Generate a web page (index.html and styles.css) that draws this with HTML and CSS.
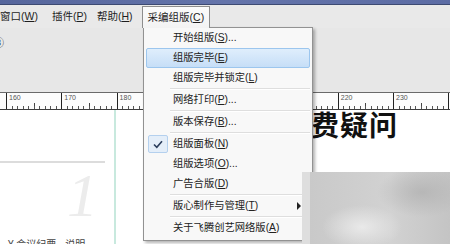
FILE: index.html
```
<!DOCTYPE html>
<html lang="zh-CN">
<head>
  <meta charset="UTF-8">
  <title>采编组版</title>
  <link rel="stylesheet" href="styles.css">
</head>
<body>
  <div class="titlebar"></div>

  <div class="menubar">
    <span class="menu-item">窗口(<u>W</u>)</span>
    <span class="menu-item">插件(<u>P</u>)</span>
    <span class="menu-item help">帮助(<u>H</u>)</span>
    <span class="menu-item open">采编组版(<u>C</u>)</span>
  </div>

  <div class="toolbar"><span class="tool-glyph">③</span></div>

  <div class="ruler">
    <div class="ruler-cell">160</div>
    <div class="ruler-cell">170</div>
    <div class="ruler-cell">180</div>
    <div class="ruler-cell">190</div>
    <div class="ruler-cell">200</div>
    <div class="ruler-cell">210</div>
    <div class="ruler-cell">220</div>
    <div class="ruler-cell">230</div>
    <div class="ruler-cell"></div>
  </div>

  <div class="workspace">
    <div class="col-left">
      <div class="rule-line"></div>
      <div class="page-num">1</div>
      <div class="foot-text">¥ 会议纪要 · 说明</div>
    </div>
    <div class="guide"></div>
    <div class="col-mid"></div>
    <div class="col-right">
      <div class="headline">费疑问</div>
    </div>
  </div>

  <div class="dropdown">
    <div class="item">开始组版(<u>S</u>)...</div>
    <div class="item active">组版完毕(<u>E</u>)</div>
    <div class="item">组版完毕并锁定(<u>L</u>)</div>
    <div class="sep"></div>
    <div class="item">网络打印(<u>P</u>)...</div>
    <div class="sep"></div>
    <div class="item">版本保存(<u>B</u>)...</div>
    <div class="sep"></div>
    <div class="item checked">
      <span class="check">
        <svg width="10" height="9" viewBox="0 0 10 9"><path d="M1 4.5 L3.8 7.3 L9 1.2" fill="none" stroke="#2b3d5c" stroke-width="1.6"/></svg>
      </span>
      组版面板(<u>N</u>)
    </div>
    <div class="item">组版选项(<u>O</u>)...</div>
    <div class="item">广告合版(<u>D</u>)</div>
    <div class="sep"></div>
    <div class="item has-sub">版心制作与管理(<u>T</u>)<span class="arrow"></span></div>
    <div class="sep"></div>
    <div class="item">关于飞腾创艺网络版(<u>A</u>)</div>
  </div>

  <div class="blur"></div>
</body>
</html>
```

FILE: styles.css
```
* {
  margin: 0;
  padding: 0;
  box-sizing: border-box;
}

body {
  width: 450px;
  height: 244px;
  overflow: hidden;
  position: relative;
  background: #e8e8e8;
  font-family: 'Liberation Sans', 'Noto Sans CJK SC', sans-serif;
  font-size: 10.5px;
  color: #1e1e1e;
}

u {
  text-decoration: underline;
  text-underline-offset: 1px;
}

.titlebar {
  height: 5px;
  background: linear-gradient(to right, #56669c, #6474aa 50%, #5c6ca4);
  border-bottom: 1px solid #3d4a72;
}

.menubar {
  height: 23px;
  display: flex;
  align-items: flex-end;
  background: #e9e9e9;
}

.menu-item {
  height: 22px;
  line-height: 20px;
  padding: 0 7px;
  white-space: nowrap;
}

.menu-item:first-child {
  margin-left: -7px;
}

.menu-item.help {
  margin-left: -4px;
}

.menu-item.open {
  position: relative;
  z-index: 3;
  margin-left: 2px;
  padding: 0 5px;
  border: 1px solid #8d8d8d;
  border-bottom: none;
  background: linear-gradient(#fbfbfb, #f3f3f3);
}

.toolbar {
  height: 64px;
  background: #e7e7e7;
  padding-top: 6px;
}

.tool-glyph {
  display: inline-block;
  margin-left: -7px;
  font-size: 11px;
  color: #333;
}

.ruler {
  height: 18px;
  display: flex;
  padding-left: 6px;
  border-top: 1px solid #6a6a6a;
  border-bottom: 1px solid #3c3c3c;
  background:
    repeating-linear-gradient(90deg, #555 0 1px, transparent 1px 5.53px) 6px 100% / 100% 3px no-repeat,
    repeating-linear-gradient(90deg, #444 0 1px, transparent 1px 27.65px) 6px 100% / 100% 6px no-repeat,
    #fcfcfc;
}

.ruler-cell {
  flex: none;
  width: 55.3px;
  border-left: 1px solid #222;
  padding: 1px 0 0 2px;
  font-size: 7px;
  line-height: 8px;
  color: #555;
}

.workspace {
  height: 134px;
  display: flex;
  background: #fff;
}

.col-left {
  width: 114px;
  padding-top: 51px;
}

.rule-line {
  width: 105px;
  height: 2px;
  background: #dcdcdc;
}

.page-num {
  margin: 3px 0 0 67px;
  font-family: 'Liberation Serif', serif;
  font-style: italic;
  font-size: 62px;
  line-height: 58px;
  color: #ececec;
}

.foot-text {
  margin: 12px 0 0 8px;
  font-size: 10px;
  color: #444;
  white-space: nowrap;
}

.guide {
  width: 2px;
  background: #c8e9de;
}

.col-mid {
  width: 194px;
  border-right: 1px solid #b9b9b9;
  height: 62px;
}

.col-right {
  flex: 1;
  padding: 0 0 0 1px;
}

.headline {
  font-family: 'Noto Sans CJK SC', sans-serif;
  font-weight: 700;
  font-size: 28px;
  line-height: 28px;
  color: #111;
  letter-spacing: 1px;
}

.dropdown {
  position: absolute;
  left: 143px;
  top: 27px;
  width: 170px;
  height: 214px;
  z-index: 2;
  padding: 0 2px;
  background: #f8f8f8;
  border: 1px solid #929292;
  box-shadow: 2px 2px 3px rgba(0, 0, 0, 0.3);
}

.item {
  height: 20px;
  line-height: 20px;
  padding-left: 27px;
  position: relative;
  white-space: nowrap;
  font-size: 10.3px;
  color: #222;
}

.item.active {
  background: linear-gradient(#dfeefc, #c6def7);
  border: 1px solid #9cc6ee;
  border-radius: 2px;
  line-height: 18px;
  padding-left: 26px;
}

.sep {
  height: 2px;
  margin-left: 24px;
  border-top: 1px solid #dedede;
  border-bottom: 1px solid #fff;
}

.check {
  position: absolute;
  left: 2px;
  top: 1px;
  width: 20px;
  height: 18px;
  display: flex;
  align-items: center;
  justify-content: center;
  background: #e4eef9;
  border: 1px solid #b4d0ee;
  border-radius: 2px;
}

.arrow {
  position: absolute;
  right: 9px;
  top: 6px;
  border-left: 4px solid #222;
  border-top: 4px solid transparent;
  border-bottom: 4px solid transparent;
}

.blur {
  position: absolute;
  left: 302px;
  top: 172px;
  width: 148px;
  height: 72px;
  z-index: 4;
  background:
    radial-gradient(ellipse 40px 22px at 60px 55px, rgba(236, 236, 236, 0.9), transparent),
    radial-gradient(ellipse 45px 25px at 120px 20px, rgba(178, 178, 178, 0.8), transparent),
    linear-gradient(90deg, #dedede 0 8px, #c9c9c9 8px, #d2d2d2 60%, #c4c4c4);
}
```
